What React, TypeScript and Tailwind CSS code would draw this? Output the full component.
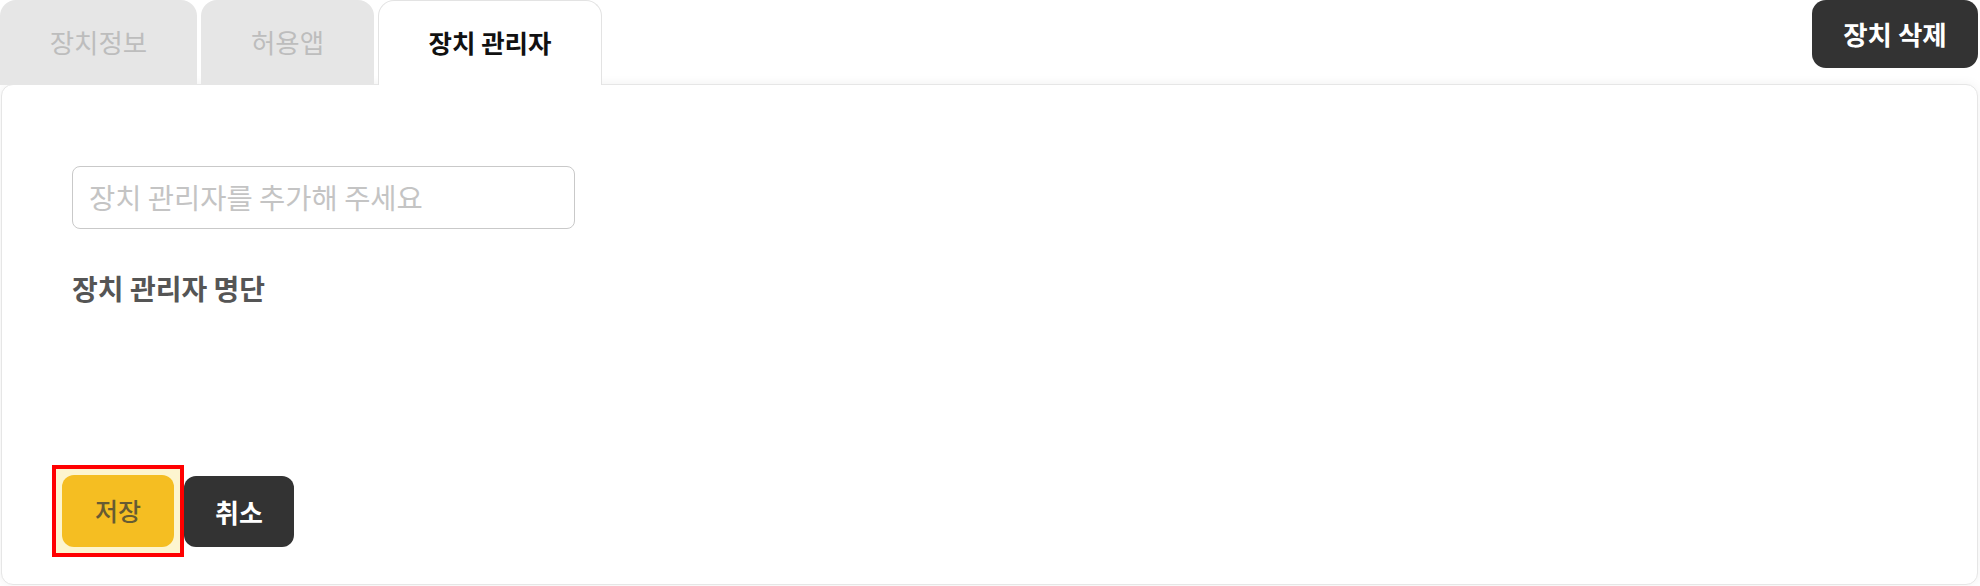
export default function App() {
  const font = { fontFamily: '"Noto Sans CJK KR", "Noto Sans", sans-serif' };
  return (
    <div className="w-[1980px] h-[586px] bg-white overflow-hidden" style={font}>
      <div className="flex items-start justify-between pr-[2px]">
        <div className="relative z-10 -mb-px flex gap-[4px]">
          <div className="flex h-[85px] w-[197px] items-center justify-center rounded-t-[16px] bg-[#e6e6e6] pb-[2px] text-[26.5px] text-[#bdbdbd]">
            장치정보
          </div>
          <div className="flex h-[85px] w-[173px] items-center justify-center rounded-t-[16px] bg-[#e6e6e6] pb-[2px] text-[26.5px] text-[#bdbdbd]">
            허용앱
          </div>
          <div className="flex h-[85px] w-[224px] items-center justify-center rounded-t-[16px] border border-b-0 border-[#e3e3e3] bg-white pb-[2px] text-[25.5px] font-bold text-[#111111]">
            장치 관리자
          </div>
        </div>
        <button
          className="flex h-[68px] w-[166px] items-center justify-center rounded-[14px] bg-[#333333] text-[26.5px] font-bold text-white"
          style={font}
        >
          장치 삭제
        </button>
      </div>
      <div className="ml-[1px] mr-[2px] flex h-[501px] flex-col rounded-[12px] border border-[#e6e6e6] bg-white shadow-[0_0_12px_rgba(0,0,0,0.06)]">
        <div className="pl-[70px] pt-[81px]">
          <input
            className="h-[63px] w-[503px] rounded-[8px] border border-[#c9c9c9] px-[16px] pb-[3px] text-[28.5px] text-[#333] outline-none placeholder:text-[#c4c4c4]"
            placeholder="장치 관리자를 추가해 주세요"
            style={font}
          />
          <div className="mt-[43px] text-[28px] font-bold leading-[32px] text-[#555555]">장치 관리자 명단</div>
        </div>
        <div className="flex-1" />
        <div className="flex items-center pb-[27px] pl-[50px]">
          <div className="border-4 border-[#ff0000] bg-[#fdf5cf] p-[6px]">
            <button
              className="flex h-[72px] w-[112px] items-center justify-center rounded-[12px] bg-[#f5be22] text-[25px] font-medium text-[#665b33]"
              style={font}
            >
              저장
            </button>
          </div>
          <button
            className="flex h-[71px] w-[110px] items-center justify-center rounded-[12px] bg-[#333333] text-[26px] font-bold text-white"
            style={font}
          >
            취소
          </button>
        </div>
      </div>
    </div>
  );
}
